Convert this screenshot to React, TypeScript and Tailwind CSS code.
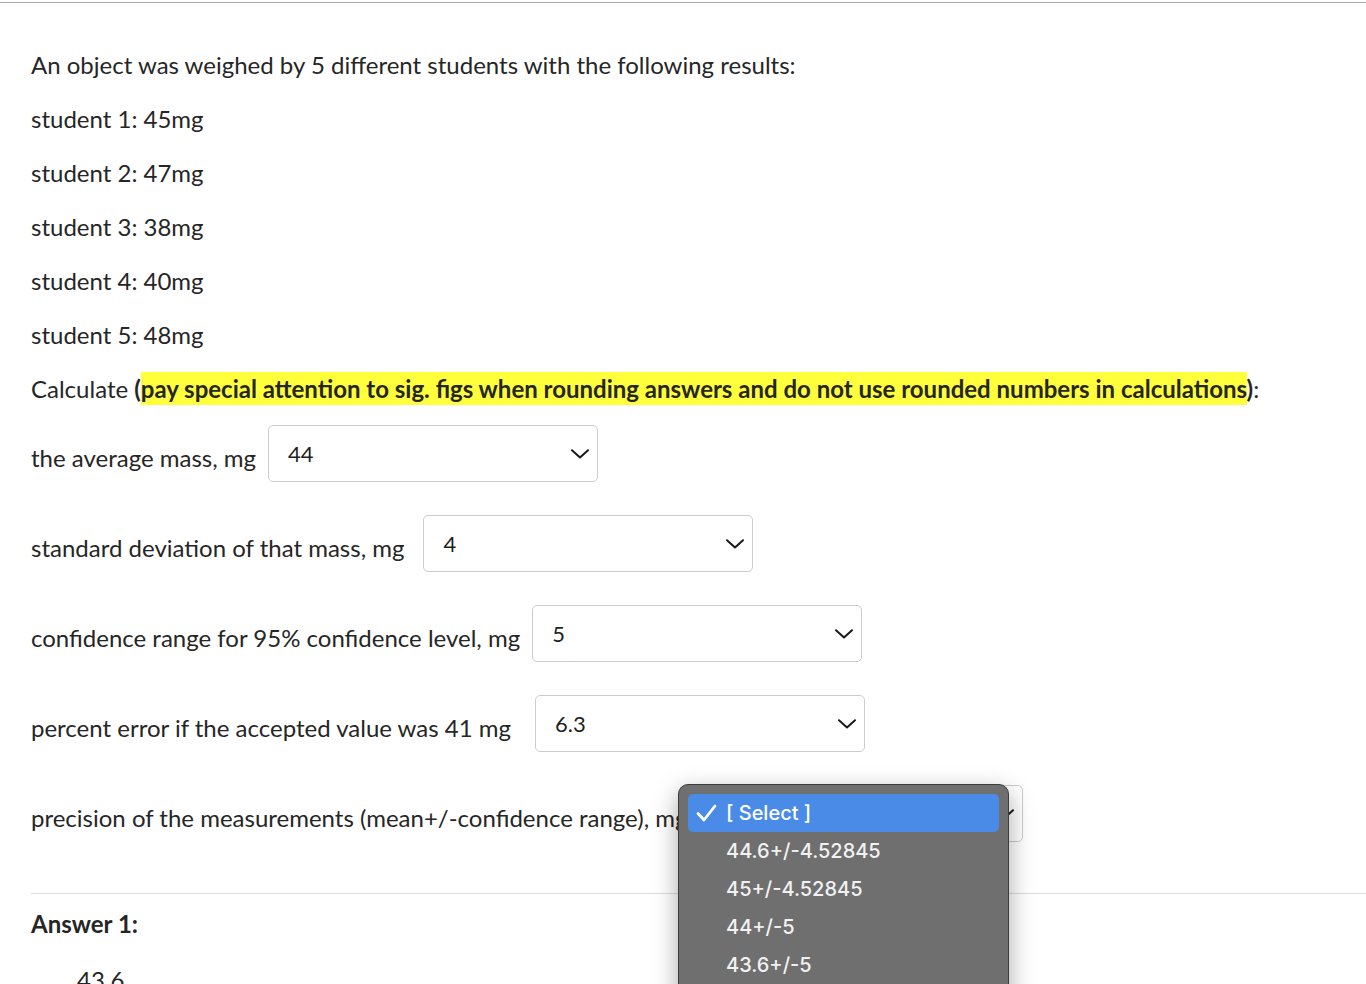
import React from "react";

const lato = { fontFamily: "Lato, 'Open Sans', sans-serif" };

function Chevron() {
  return (
    <svg width="18" height="10" viewBox="0 0 18 10" fill="none">
      <path d="M1 1.2 L9 8.5 L17 1.2" stroke="#1a1a1a" strokeWidth="2" strokeLinecap="round" strokeLinejoin="round" />
    </svg>
  );
}

function Select({ value }: { value: string }) {
  return (
    <div className="flex h-[57px] w-[330px] shrink-0 items-center justify-between rounded-[5px] border border-[#c9cdd0] bg-white pl-[19px] pr-[8px]">
      <span className="text-[22px] text-[#1f1f1f]">{value}</span>
      <Chevron />
    </div>
  );
}

function Row({ label, value, gap }: { label: string; value: string; gap: string }) {
  return (
    <div className={`mb-[33px] flex items-center ${gap}`}>
      <span className="pt-[9px]">{label}</span>
      <Select value={value} />
    </div>
  );
}

export default function App() {
  const items = ["44.6+/-4.52845", "45+/-4.52845", "44+/-5", "43.6+/-5"];
  return (
    <div className="relative h-[984px] w-[1366px] overflow-hidden bg-white text-[24px] leading-[34px] text-[#262626]" style={lato}>
      <div className="mt-[2px] h-px w-full bg-[#a9a9a9]" />
      <div className="pl-[31px] pt-[45px]">
        <p className="mb-[20px]">An object was weighed by 5 different students with the following results:</p>
        <p className="mb-[20px]">student 1: 45mg</p>
        <p className="mb-[20px]">student 2: 47mg</p>
        <p className="mb-[20px]">student 3: 38mg</p>
        <p className="mb-[20px]">student 4: 40mg</p>
        <p className="mb-[20px]">student 5: 48mg</p>
        <p className="mb-[19px]">
          Calculate <strong className="font-bold">(<span className="bg-[#ffff3b] py-[2px]">pay special attention to sig. figs when rounding answers and do not use rounded numbers in calculations</span>)</strong>:
        </p>
        <Row label="the average mass, mg" value="44" gap="gap-[12px]" />
        <Row label="standard deviation of that mass, mg" value="4" gap="gap-[19px]" />
        <Row label="confidence range for 95% confidence level, mg" value="5" gap="gap-[12px]" />
        <Row label="percent error if the accepted value was 41 mg" value="6.3" gap="gap-[24px]" />
        <div className="flex items-center gap-[6px]">
          <span className="pt-[9px]">precision of the measurements (mean+/-confidence range), mg</span>
          <Select value="" />
        </div>
        <div className="mt-[51px] h-px bg-[#dcdcdc]" />
        <p className="mt-[13px] font-bold">Answer 1:</p>
        <p className="mt-[22px] pl-[46px]">43.6</p>
      </div>

      <div
        className="absolute left-[678px] top-[784px] h-[230px] w-[331px] rounded-[10px] border border-[#3c3c3c] bg-[#6f6f6f] px-[9px] pt-[9px] shadow-[0_8px_24px_rgba(0,0,0,0.35)]"
        style={{ fontFamily: "Inter, 'Open Sans', sans-serif" }}
      >
        <div className="flex h-[38px] items-center rounded-[5px] bg-[#4a8be8] text-[20px] font-medium text-white">
          <svg className="ml-[8px] mr-[9px]" width="21" height="18" viewBox="0 0 21 18" fill="none">
            <path d="M2 9.5 L8 16 L19 2" stroke="white" strokeWidth="2.8" strokeLinecap="round" strokeLinejoin="round" />
          </svg>
          <span>[ Select ]</span>
        </div>
        {items.map((t) => (
          <div key={t} className="flex h-[38px] items-center pl-[38px] text-[20px] font-medium text-[#f2f2f2]">
            {t}
          </div>
        ))}
      </div>
    </div>
  );
}
